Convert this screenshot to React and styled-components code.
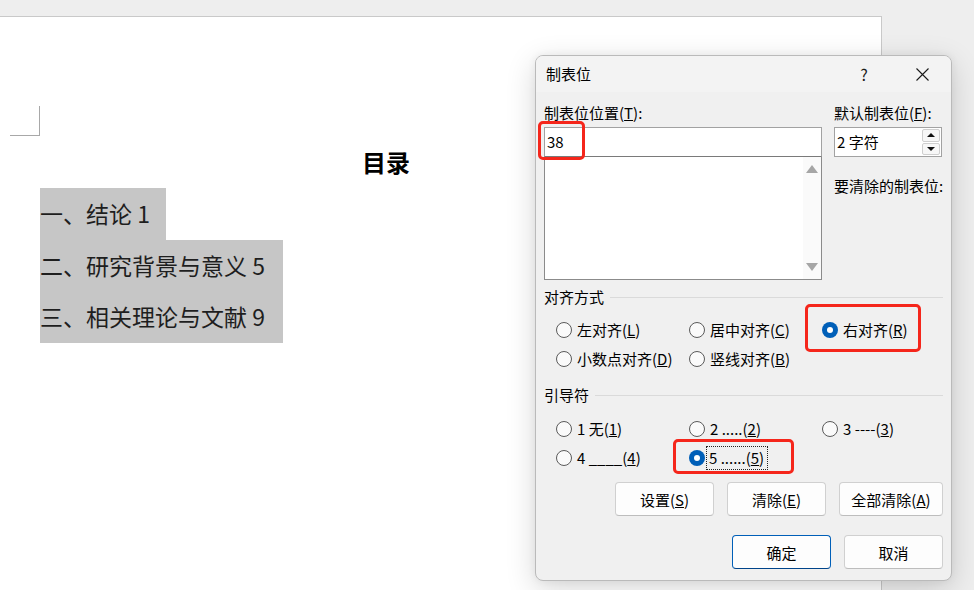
import React from 'react';
import styled, { createGlobalStyle } from 'styled-components';

const GlobalStyle = createGlobalStyle`
  html, body {
    margin: 0;
    padding: 0;
  }
  body {
    background: #eeeeee;
    font-family: "Noto Sans CJK SC", "Noto Sans", sans-serif;
  }
`;

const Screen = styled.div`
  position: relative;
  width: 974px;
  height: 590px;
  overflow: hidden;
  background: #eeeeee;
`;

const Page = styled.div`
  margin-top: 16px;
  width: 882px;
  height: 574px;
  box-sizing: border-box;
  background: #ffffff;
  border-top: 1px solid #c9c9c9;
  border-right: 1px solid #c9c9c9;
  font-family: "Noto Sans CJK SC", sans-serif;
  color: #1e1e1e;
`;

const CornerMark = styled.div`
  margin: 89px 0 0 10px;
  width: 30px;
  height: 30px;
  box-sizing: border-box;
  border-right: 1px solid #a8a8a8;
  border-bottom: 1px solid #a8a8a8;
`;

const Heading = styled.h1`
  margin: 8px 0 0 362px;
  font-size: 24px;
  line-height: 36px;
  font-weight: bold;
  color: #000;
`;

const TocList = styled.div`
  margin: 8px 0 0 40px;
`;

const TocLine = styled.div`
  width: ${p => p.width}px;
  height: 51.7px;
  line-height: 51.7px;
  background: #c6c6c6;
  font-size: 23px;
  white-space: nowrap;
`;

const Dialog = styled.div`
  position: absolute;
  left: 535px;
  top: 55px;
  width: 417px;
  height: 526px;
  box-sizing: border-box;
  display: flex;
  flex-direction: column;
  border: 1px solid #bababa;
  border-radius: 8px;
  overflow: hidden;
  background: #f0f0f0;
  box-shadow: 0 8px 30px rgba(0, 0, 0, 0.16), 0 0 8px rgba(0, 0, 0, 0.06);
  font-family: "Noto Sans CJK SC", sans-serif;
  font-size: 15px;
  color: #000;
`;

const TitleBar = styled.div`
  display: flex;
  align-items: center;
  height: 36px;
  padding: 0 6px 0 10px;
  background: #f3f3f3;
`;

const Title = styled.div`
  flex: 1;
  line-height: 20px;
`;

const TitleButton = styled.div`
  width: 46px;
  height: 30px;
  display: flex;
  align-items: center;
  justify-content: center;
  font-size: 16px;
  color: #1a1a1a;
`;

const TitleButtons = styled.div`
  display: flex;
  gap: 12px;
`;

const Body = styled.div`
  flex: 1;
  display: flex;
  flex-direction: column;
  padding: 11px 8px 10px 8px;
`;

const TopSection = styled.div`
  display: grid;
  grid-template-columns: 278px 108px;
  column-gap: 12px;
  align-items: start;
`;

const Column = styled.div`
  display: flex;
  flex-direction: column;
`;

const Label = styled.div`
  height: 20px;
  line-height: 20px;
  margin-bottom: ${p => p.gapBelow || 0}px;
  margin-top: ${p => p.gapAbove || 0}px;
  white-space: nowrap;
`;

const Field = styled.div`
  position: relative;
`;

const TextBox = styled.div`
  height: 30px;
  box-sizing: border-box;
  border: 1px solid #a2a2a2;
  border-bottom-color: #7a7a7a;
  background: #ffffff;
  padding-left: 2px;
  line-height: 28px;
`;

const ListBox = styled.div`
  height: 123px;
  box-sizing: border-box;
  border: 1px solid #8b8b8b;
  border-top: none;
  background: #ffffff;
  display: flex;
  justify-content: flex-end;
`;

const ScrollBar = styled.div`
  width: 18px;
  display: flex;
  flex-direction: column;
  justify-content: space-between;
  align-items: center;
  padding: 8px 0;
  background: #fafafa;
`;

const Arrow = styled.div`
  width: 0;
  height: 0;
  border-left: 6px solid transparent;
  border-right: 6px solid transparent;
  ${p => p.down
    ? 'border-top: 8px solid #a6a6a6;'
    : 'border-bottom: 8px solid #a6a6a6;'}
`;

const SpinBox = styled.div`
  height: 30px;
  box-sizing: border-box;
  display: flex;
  border: 1px solid #a2a2a2;
  background: #ffffff;
`;

const SpinValue = styled.div`
  flex: 1;
  padding-left: 2px;
  line-height: 28px;
`;

const SpinButtons = styled.div`
  width: 18px;
  display: flex;
  flex-direction: column;
  gap: 1px;
  padding: 1px 1px 1px 0;
`;

const SpinButton = styled.div`
  flex: 1;
  display: flex;
  align-items: center;
  justify-content: center;
  border: 1px solid #cfcfcf;
  border-radius: 2px;
  background: #f7f7f7;
`;

const SpinArrow = styled.div`
  width: 0;
  height: 0;
  border-left: 4px solid transparent;
  border-right: 4px solid transparent;
  ${p => p.down
    ? 'border-top: 4px solid #111;'
    : 'border-bottom: 4px solid #111;'}
`;

const GroupHeader = styled.div`
  display: flex;
  align-items: center;
  gap: 6px;
  height: 20px;
  line-height: 20px;
  margin-top: ${p => p.gapAbove}px;
  &::after {
    content: '';
    flex: 1;
    height: 1px;
    background: #dadada;
  }
`;

const RadioGrid = styled.div`
  display: grid;
  grid-template-columns: repeat(3, 133px);
  grid-auto-rows: 29px;
  padding: ${p => p.padTop}px 0 0 12px;
`;

const RadioItem = styled.div`
  position: relative;
  display: flex;
  align-items: center;
  gap: 5px;
  white-space: nowrap;
`;

const RadioCircle = styled.div`
  width: 16px;
  height: 16px;
  box-sizing: border-box;
  border-radius: 50%;
  flex-shrink: 0;
  display: flex;
  align-items: center;
  justify-content: center;
  background: ${p => (p.checked ? '#005fb8' : '#fafafa')};
  border: ${p => (p.checked ? 'none' : '1px solid #5a5a5a')};
  &::after {
    content: '';
    display: ${p => (p.checked ? 'block' : 'none')};
    width: 6px;
    height: 6px;
    border-radius: 50%;
    background: #ffffff;
  }
`;

const RadioText = styled.span`
  line-height: 20px;
  ${p => p.focused && `
    outline: 1px dotted #222;
    outline-offset: 0;
    padding: 1px 3px 1px 2px;
    margin-left: -3px;
  `}
`;

const Annotation = styled.div`
  position: absolute;
  left: ${p => p.left}px;
  top: ${p => p.top}px;
  width: ${p => p.w}px;
  height: ${p => p.h}px;
  box-sizing: border-box;
  border: 3px solid #f5261b;
  border-radius: 5px;
  pointer-events: none;
`;

const ButtonRow = styled.div`
  display: flex;
  justify-content: flex-end;
  gap: 13px;
  margin-top: ${p => p.gapAbove}px;
`;

const Button = styled.div`
  width: ${p => p.width}px;
  height: 34px;
  box-sizing: border-box;
  display: flex;
  align-items: center;
  justify-content: center;
  border-radius: 4px;
  background: #fdfdfd;
  border: 1px solid ${p => (p.primary ? '#005fb8' : '#d0d0d0')};
  border-bottom-color: ${p => (p.primary ? '#00448a' : '#bdbdbd')};
  white-space: nowrap;
`;

const CloseIcon = () => (
  <svg width="13" height="13" viewBox="0 0 13 13">
    <path d="M0.5 0.5 L12.5 12.5 M12.5 0.5 L0.5 12.5" stroke="#1a1a1a" strokeWidth="1.1" fill="none" />
  </svg>
);

const Radio = ({ checked, focused, children, annotate }) => (
  <RadioItem>
    <RadioCircle checked={checked} />
    <RadioText focused={focused}>{children}</RadioText>
    {annotate && <Annotation {...annotate} />}
  </RadioItem>
);

export default function App() {
  return (
    <>
      <GlobalStyle />
      <Screen>
        <Page>
          <CornerMark />
          <Heading>目录</Heading>
          <TocList>
            <TocLine width={126}>一、结论 1</TocLine>
            <TocLine width={243}>二、研究背景与意义 5</TocLine>
            <TocLine width={243}>三、相关理论与文献 9</TocLine>
          </TocList>
        </Page>

        <Dialog>
          <TitleBar>
            <Title>制表位</Title>
            <TitleButtons>
              <TitleButton>?</TitleButton>
              <TitleButton><CloseIcon /></TitleButton>
            </TitleButtons>
          </TitleBar>

          <Body>
            <TopSection>
              <Column>
                <Label gapBelow={4}>制表位位置(<u>T</u>):</Label>
                <Field>
                  <TextBox>38</TextBox>
                  <Annotation left={-6} top={-6} w={47} h={39} />
                </Field>
                <ListBox>
                  <ScrollBar>
                    <Arrow />
                    <Arrow down />
                  </ScrollBar>
                </ListBox>
              </Column>
              <Column>
                <Label gapBelow={4}>默认制表位(<u>F</u>):</Label>
                <SpinBox>
                  <SpinValue>2 字符</SpinValue>
                  <SpinButtons>
                    <SpinButton><SpinArrow /></SpinButton>
                    <SpinButton><SpinArrow down /></SpinButton>
                  </SpinButtons>
                </SpinBox>
                <Label gapAbove={19}>要清除的制表位:</Label>
              </Column>
            </TopSection>

            <GroupHeader gapAbove={7}>对齐方式</GroupHeader>
            <RadioGrid padTop={8}>
              <Radio>左对齐(<u>L</u>)</Radio>
              <Radio>居中对齐(<u>C</u>)</Radio>
              <Radio checked annotate={{ left: -17, top: -11, w: 116, h: 48 }}>右对齐(<u>R</u>)</Radio>
              <Radio>小数点对齐(<u>D</u>)</Radio>
              <Radio>竖线对齐(<u>B</u>)</Radio>
            </RadioGrid>

            <GroupHeader gapAbove={12}>引导符</GroupHeader>
            <RadioGrid padTop={9}>
              <Radio>1 无(<u>1</u>)</Radio>
              <Radio>2 .....(<u>2</u>)</Radio>
              <Radio>3 ----(<u>3</u>)</Radio>
              <Radio>4 ____(<u>4</u>)</Radio>
              <Radio checked focused annotate={{ left: -16, top: -4, w: 121, h: 35 }}>5 ......(<u>5</u>)</Radio>
            </RadioGrid>

            <ButtonRow gapAbove={10}>
              <Button width={99}>设置(<u>S</u>)</Button>
              <Button width={99}>清除(<u>E</u>)</Button>
              <Button width={104}>全部清除(<u>A</u>)</Button>
            </ButtonRow>
            <ButtonRow gapAbove={19}>
              <Button width={99} primary>确定</Button>
              <Button width={99}>取消</Button>
            </ButtonRow>
          </Body>
        </Dialog>
      </Screen>
    </>
  );
}
